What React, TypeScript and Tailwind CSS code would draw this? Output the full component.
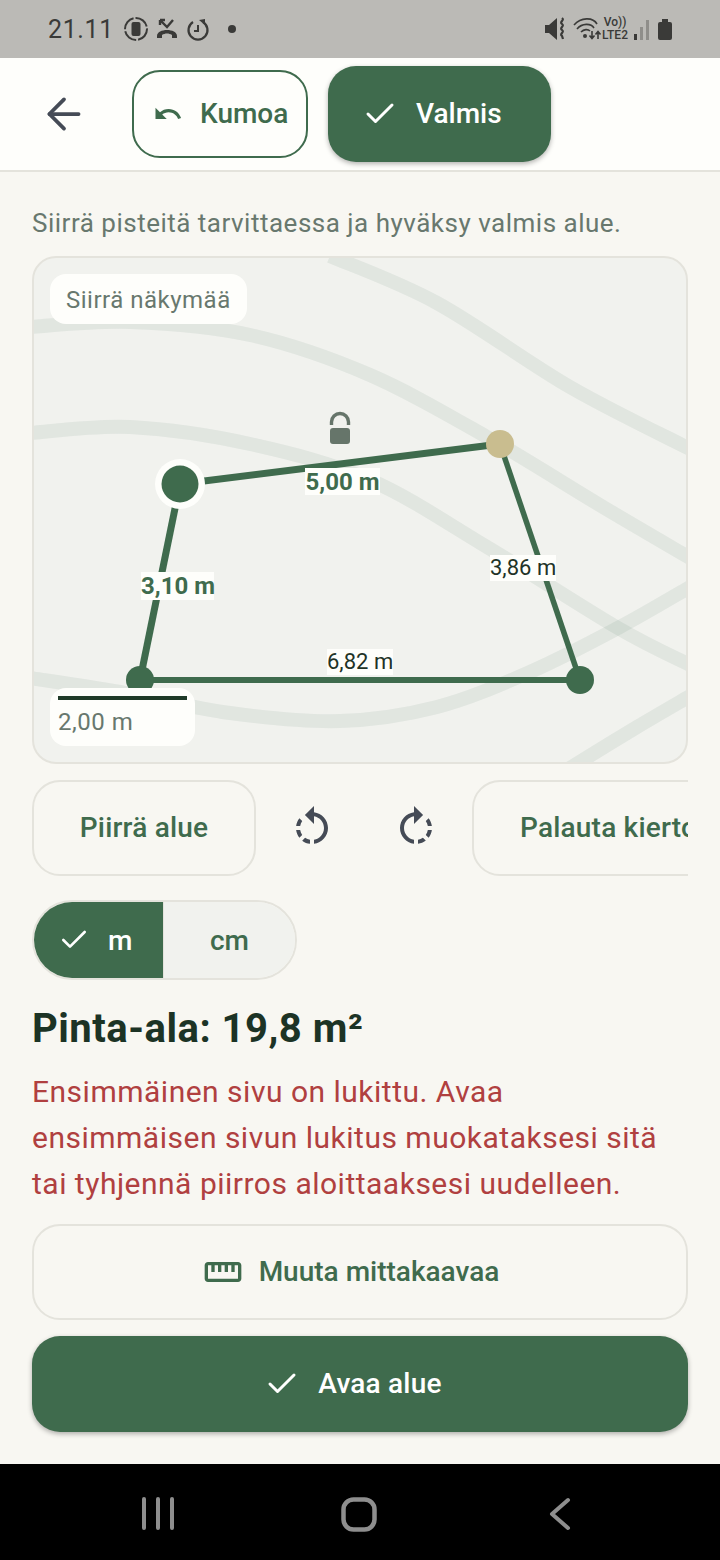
import React from 'react';
import { ArrowLeft, Check } from 'lucide-react';

const GREEN = '#3f6b4d';

type Pt = [number, number];

const bandPoints: Pt[][] = [
  [[330, 256], [437, 303], [570, 387], [690, 449]],
  [[30, 327], [130, 322], [250, 335], [370, 375], [487, 437], [603, 507], [690, 558]],
  [[30, 433], [130, 427], [250, 444], [370, 480], [487, 547], [618, 628], [690, 665]],
  [[30, 678], [120, 692], [230, 713], [340, 721], [437, 707], [530, 672], [618, 628], [690, 587]],
  [[570, 768], [637, 727], [690, 696]],
];

// catmull-rom through the measured points
function smooth(pts: Pt[]) {
  let d = `M${pts[0][0]} ${pts[0][1]}`;
  for (let i = 0; i < pts.length - 1; i++) {
    const p0 = pts[Math.max(i - 1, 0)];
    const p1 = pts[i];
    const p2 = pts[i + 1];
    const p3 = pts[Math.min(i + 2, pts.length - 1)];
    d += ` C${p1[0] + (p2[0] - p0[0]) / 6} ${p1[1] + (p2[1] - p0[1]) / 6}, ${p2[0] - (p3[0] - p1[0]) / 6} ${p2[1] - (p3[1] - p1[1]) / 6}, ${p2[0]} ${p2[1]}`;
  }
  return d;
}

function MapLabel({ className, children }: { className: string; children: React.ReactNode }) {
  return <div className={`absolute bg-[#fefefb] text-center whitespace-nowrap ${className}`}>{children}</div>;
}

function MapCard() {
  return (
    <div className="relative w-full h-[508px] rounded-[24px] border-2 border-[#e4e3dc] bg-[#f1f2ee] overflow-hidden">
      <svg className="absolute inset-0 w-full h-full" viewBox="34 258 652 504">
        {bandPoints.map((pts, i) => (
          <path key={i} d={smooth(pts)} fill="none" stroke="#3f6b4d" strokeOpacity="0.085" strokeWidth="14" />
        ))}
        <line x1="140" y1="680" x2="580" y2="680" stroke={GREEN} strokeWidth="6" />
        <line x1="500" y1="444" x2="580" y2="680" stroke={GREEN} strokeWidth="5.5" />
        <line x1="180" y1="484" x2="500" y2="444" stroke={GREEN} strokeWidth="7" />
        <line x1="180" y1="484" x2="140" y2="680" stroke={GREEN} strokeWidth="7" />
        <circle cx="140" cy="680" r="14" fill={GREEN} />
        <circle cx="580" cy="680" r="14" fill={GREEN} />
        <circle cx="500" cy="444" r="14" fill="#c9bd8f" />
        <circle cx="180" cy="484" r="25" fill="#fefefb" />
        <circle cx="180" cy="484" r="18.5" fill={GREEN} />
        {/* open lock */}
        <path d="M331.5 425 v-3 a8.5 8.5 0 0 1 17 0 v3" fill="none" stroke="#66756a" strokeWidth="3.4" />
        <rect x="330" y="428" width="20" height="16" rx="3" fill="#66756a" />
      </svg>

      <div className="absolute left-[16px] top-[16px] h-[50px] w-[197px] rounded-[16px] bg-[#fefefb] flex items-center pl-[16px] pt-[2px] text-[24px] tracking-[0.5px] text-[#68786e]">
        Siirrä näkymää
      </div>

      <MapLabel className="left-[271px] top-[210px] w-[75px] h-[27px] text-[24px] leading-[29px] font-bold text-[#3f6b4d]">5,00 m</MapLabel>
      <MapLabel className="left-[107px] top-[314px] w-[73px] h-[28px] text-[24px] leading-[28px] font-bold text-[#3f6b4d]">3,10 m</MapLabel>
      <MapLabel className="left-[456px] top-[297px] w-[66px] h-[26px] text-[22px] leading-[26px] text-[#1f3327]">3,86 m</MapLabel>
      <MapLabel className="left-[293px] top-[391px] w-[66px] h-[26px] text-[22px] leading-[26px] text-[#1f3327]">6,82 m</MapLabel>

      <div className="absolute left-[16px] top-[430px] h-[58px] w-[145px] rounded-[16px] bg-[#fefefb] px-[8px] pt-[8px]">
        <div className="h-[4px] w-[129px] bg-[#1f3a28]" />
        <div className="mt-[6px] text-[24px] leading-[32px] tracking-[0.5px] text-[#68786e]">2,00 m</div>
      </div>
    </div>
  );
}

function StatusBar() {
  return (
    <div className="h-[58px] shrink-0 bg-[#bbbab6] flex items-center justify-between pl-[48px] pr-[48px] text-[#3a3a38]">
      <div className="flex items-center">
        <span className="text-[25px] tracking-[0.6px] leading-none">21.11</span>
        <svg className="ml-[9px]" width="26" height="26" viewBox="0 0 26 26">
          <circle cx="13" cy="13" r="11" fill="none" stroke="currentColor" strokeWidth="2" strokeDasharray="15 2" />
          <rect x="8.5" y="6" width="9" height="14" rx="2" fill="currentColor" />
        </svg>
        <svg className="ml-[6px]" width="24" height="24" viewBox="0 0 24 24">
          <path d="M5 3 L12 10 L18 3 M5 3 h5 M5 3 v5" fill="none" stroke="currentColor" strokeWidth="2.4" />
          <path d="M2 19 c0 -8 20 -8 20 0 l0 2 h-5 v-3 c-3 -2 -7 -2 -10 0 v3 h-5z" fill="currentColor" />
        </svg>
        <svg className="ml-[7px]" width="24" height="24" viewBox="0 0 24 24">
          <path d="M17 5 A9.5 9.5 0 1 1 7 5" fill="none" stroke="currentColor" strokeWidth="2.2" />
          <path d="M13 3 l6 -1 v6z" fill="currentColor" />
          <path d="M12 8 v6 h-4" fill="none" stroke="currentColor" strokeWidth="2" />
        </svg>
        <span className="ml-[18px] w-[8px] h-[8px] rounded-full bg-current" />
      </div>
      <div className="flex items-center">
        <svg width="22" height="26" viewBox="0 0 22 26">
          <path d="M1 9 h4 l8 -7 v22 l-8 -7 h-4z" fill="currentColor" />
          <path d="M18 2 c3 2.5 -3 3.5 0 6 c3 2.5 -3 3.5 0 6 c3 2.5 -3 3.5 0 6 l1 3" fill="none" stroke="currentColor" strokeWidth="2.2" />
        </svg>
        <svg className="ml-[7px]" width="30" height="26" viewBox="0 0 30 26">
          <path d="M1 9 C8 1 20 1 24 8 M4 13 C9 7 18 7 21 12 M8 16 C11 13 15 13 17 15" fill="none" stroke="currentColor" strokeWidth="1.6" />
          <circle cx="12" cy="20" r="2" fill="currentColor" />
          <path d="M19 15 v7 M16.5 19.5 l2.5 3 l2.5 -3 M25 23 v-7 M22.5 18.5 l2.5 -3 l2.5 3" fill="none" stroke="currentColor" strokeWidth="1.6" />
        </svg>
        <div className="-ml-[2px] w-[28px] flex flex-col items-center text-[12px] font-medium leading-[13px]">
          <span className="text-[12px]">Vo))</span>
          <span>LTE2</span>
        </div>
        <svg className="ml-[4px]" width="18" height="26" viewBox="0 0 18 26">
          <rect x="1" y="18" width="3" height="6" fill="currentColor" />
          <rect x="7" y="11" width="3" height="13" fill="#8f8e8a" />
          <rect x="13" y="4" width="3" height="20" fill="#8f8e8a" />
        </svg>
        <svg className="ml-[7px]" width="14" height="26" viewBox="0 0 14 26">
          <path d="M4 6 V3 h6 V6 h2 a2 2 0 0 1 2 2 V22 a2 2 0 0 1 -2 2 H2 a2 2 0 0 1 -2 -2 V8 a2 2 0 0 1 2 -2z" fill="currentColor" />
        </svg>
      </div>
    </div>
  );
}

function Header() {
  return (
    <div className="h-[114px] shrink-0 bg-[#fefefb] border-b-2 border-[#e4e3dc] flex items-center">
      <div className="ml-[48px] w-[84px] shrink-0 text-[#454b56]">
        <ArrowLeft size={50} strokeWidth={1.8} className="-ml-[9px]" />
      </div>
      <button className="h-[88px] w-[176px] rounded-[28px] border-2 border-[#3f6b4d] flex items-center pl-[19px] text-[#3f6b4d] text-[28px] font-medium">
        <svg width="30" height="30" viewBox="0 0 24 24" fill="currentColor" className="mr-[17px]">
          <path d="M12.5 8c-2.65 0-5.05.99-6.9 2.6L2 7v9h9l-3.62-3.62c1.39-1.16 3.16-1.88 5.12-1.88 3.54 0 6.55 2.31 7.6 5.5l2.37-.78C21.08 11.03 17.15 8 12.5 8z" />
        </svg>
        Kumoa
      </button>
      <button className="ml-[20px] h-[96px] w-[223px] rounded-[28px] bg-[#3f6b4d] shadow-[0_2px_5px_rgba(0,0,0,0.3)] flex items-center pl-[34px] text-white text-[28px] font-medium">
        <Check size={36} strokeWidth={2} className="mr-[18px]" />
        Valmis
      </button>
    </div>
  );
}

function Tools() {
  return (
    <div className="mt-[16px] flex gap-2 overflow-hidden">
      <button className="h-[96px] w-[224px] shrink-0 rounded-[28px] border-2 border-[#e4e3dc] text-[28px] tracking-[0.2px] font-medium text-[#3f6b4d]">Piirrä alue</button>
      <button className="h-[96px] w-[96px] shrink-0 flex items-center justify-center text-[#454b56]">
        <svg width="48" height="48" viewBox="0 0 24 24" fill="currentColor">
          <path d="M7.11 8.53L5.7 7.11C4.8 8.27 4.24 9.61 4.07 11h2.02c.14-.87.49-1.72 1.02-2.47zM6.09 13H4.07c.17 1.39.72 2.73 1.62 3.89l1.41-1.42c-.52-.75-.87-1.59-1.01-2.47zm1.01 5.32c1.16.9 2.51 1.44 3.9 1.61V17.9c-.87-.15-1.71-.49-2.46-1.03L7.1 18.32zM13 4.07V1L8.45 5.55 13 10V6.09c2.84.48 5 2.94 5 5.91s-2.16 5.43-5 5.91v2.02c3.95-.49 7-3.85 7-7.93s-3.05-7.44-7-7.93z" />
        </svg>
      </button>
      <button className="h-[96px] w-[96px] shrink-0 flex items-center justify-center text-[#454b56]">
        <svg width="48" height="48" viewBox="0 0 24 24" fill="currentColor">
          <path d="M15.55 5.55L11 1v3.07C7.06 4.56 4 7.92 4 12s3.05 7.44 7 7.93v-2.02c-2.84-.48-5-2.94-5-5.91s2.16-5.43 5-5.91V10l4.55-4.45zM19.93 11c-.17-1.39-.72-2.73-1.62-3.89l-1.42 1.42c.54.75.88 1.6 1.02 2.47h2.02zM13 17.9v2.02c1.39-.17 2.74-.71 3.9-1.61l-1.44-1.44c-.75.54-1.59.89-2.46 1.03zm3.89-2.42l1.42 1.41c.9-1.16 1.45-2.5 1.62-3.89h-2.02c-.14.87-.48 1.72-1.02 2.48z" />
        </svg>
      </button>
      <button className="h-[96px] shrink-0 rounded-[28px] border-2 border-[#e4e3dc] px-[46px] text-[28px] tracking-[0.2px] font-medium text-[#3f6b4d] whitespace-nowrap">Palauta kierto</button>
    </div>
  );
}

function UnitToggle() {
  return (
    <div className="mt-[24px] h-[80px] w-[265px] rounded-full border-2 border-[#e4e3dc] overflow-hidden flex text-[28px] font-medium">
      <div className="w-[129px] bg-[#3f6b4d] text-white flex items-center pl-[24px] pt-[2px]">
        <Check size={32} strokeWidth={2} className="mr-[18px] -mt-[2px]" />
        m
      </div>
      <div className="flex-1 bg-[#f1f2ee] text-[#3f6b4d] flex items-center justify-center pt-[2px] border-l border-[#e4e3dc]">cm</div>
    </div>
  );
}

export default function App() {
  return (
    <div className="w-[720px] h-[1560px] flex flex-col bg-[#f8f7f2] overflow-hidden" style={{ fontFamily: 'Roboto, sans-serif' }}>
      <StatusBar />
      <Header />

      <div className="flex-1 px-[32px]">
        <p className="mt-[33px] text-[26px] leading-[36px] tracking-[0.5px] text-[#68786e] whitespace-nowrap">Siirrä pisteitä tarvittaessa ja hyväksy valmis alue.</p>
        <div className="mt-[15px]"><MapCard /></div>
        <Tools />
        <UnitToggle />

        <h1 className="mt-[25px] text-[40px] leading-[48px] tracking-[0.5px] font-bold text-[#1c3325]">Pinta-ala: 19,8 m²</h1>
        <p className="mt-[16px] text-[30px] leading-[46px] tracking-[0.5px] text-[#b04040] whitespace-nowrap">
          Ensimmäinen sivu on lukittu. Avaa<br />
          ensimmäisen sivun lukitus muokataksesi sitä<br />
          tai tyhjennä piirros aloittaaksesi uudelleen.
        </p>

        <button className="mt-[17px] w-full h-[96px] rounded-[28px] border-2 border-[#e4e3dc] flex items-center justify-center pr-[18px] text-[28px] font-medium text-[#3f6b4d]">
          <svg width="40" height="40" viewBox="0 0 24 24" fill="currentColor" className="mr-[16px]">
            <path d="M21 6H3c-1.1 0-2 .9-2 2v8c0 1.1.9 2 2 2h18c1.1 0 2-.9 2-2V8c0-1.1-.9-2-2-2zm0 10H3V8h2v4h2V8h2v4h2V8h2v4h2V8h2v4h2V8h2v8z" />
          </svg>
          Muuta mittakaavaa
        </button>
        <button className="mt-[16px] w-full h-[96px] rounded-[28px] bg-[#3f6b4d] shadow-[0_2px_5px_rgba(0,0,0,0.3)] flex items-center justify-center pr-[14px] text-[28px] tracking-[0.2px] font-medium text-white">
          <Check size={36} strokeWidth={2} className="mr-[18px]" />
          Avaa alue
        </button>
      </div>

      <div className="h-[96px] shrink-0 bg-black flex items-center justify-center">
        <svg width="720" height="96" viewBox="0 0 720 96" fill="none" stroke="#8e8e8e">
          <path d="M144 35 v29 M158 35 v29 M172 35 v29" strokeWidth="4" strokeLinecap="round" />
          <rect x="343.5" y="35.5" width="31" height="30" rx="10" strokeWidth="4.5" />
          <path d="M568 36 L552 50 L568 64" strokeWidth="4" strokeLinecap="round" strokeLinejoin="round" />
        </svg>
      </div>
    </div>
  );
}
